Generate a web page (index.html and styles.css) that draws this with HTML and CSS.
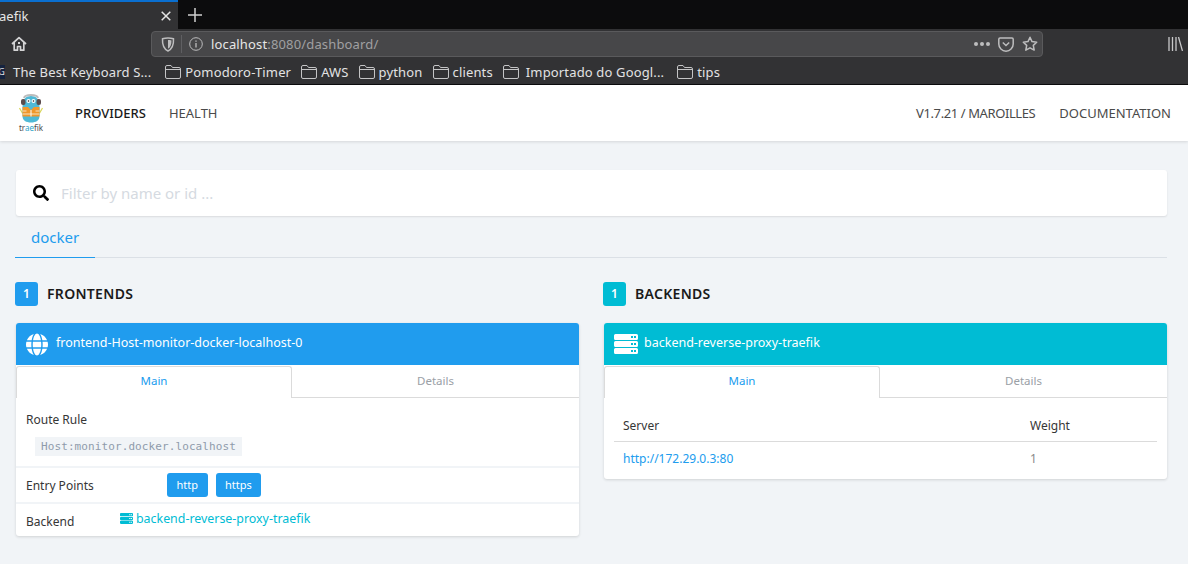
FILE: index.html
```html
<!DOCTYPE html>
<html lang="en">
<head>
    <meta charset="UTF-8">
    <meta name="viewport" content="width=device-width, initial-scale=1.0">
    <title>Traefik dashboard</title>
    <link rel="stylesheet" href="styles.css">
</head>
<body>
    <svg class="icon-defs" width="0" height="0">
        <symbol id="folder" viewBox="0 0 16 14">
            <path d="M.5 12V2A1.5 1.5 0 0 1 2 .5h4L7.500 2.500H14A1.500 1.500 0 0 1 15.500 4v8a1.500 1.500 0 0 1-1.500 1.500H2A1.500 1.500 0 0 1 .5 12zM.5 4.500h15" fill="none" stroke="currentColor"/>
        </symbol>
        <symbol id="server" viewBox="0 0 24 20">
            <path fill-rule="evenodd" d="M1.500 0h21A1.500 1.500 0 0 1 24 1.500v3A1.500 1.500 0 0 1 22.500 6h-21A1.500 1.500 0 0 1 0 4.500v-3A1.500 1.500 0 0 1 1.500 0zM17 2v2h2V2zm3 0v2h2V2zM1.500 7h21A1.500 1.500 0 0 1 24 8.500v3a1.500 1.500 0 0 1-1.500 1.500h-21A1.500 1.500 0 0 1 0 11.500v-3A1.500 1.500 0 0 1 1.500 7zM17 9v2h2V9zm3 0v2h2V9zM1.500 14h21a1.500 1.500 0 0 1 1.500 1.500v3a1.500 1.500 0 0 1-1.500 1.500h-21A1.500 1.500 0 0 1 0 18.500v-3A1.500 1.500 0 0 1 1.500 14zM17 16v2h2v-2zm3 0v2h2v-2z"/>
        </symbol>
    </svg>

    <div class="browser">
        <div class="tabstrip">
            <div class="tab">
                <span class="tab-title">aefik</span>
                <svg class="tab-close" width="10" height="10" viewBox="0 0 10 10"><path d="M.7.700l8.600 8.600M9.300.700L.7 9.300" stroke="#e4e4e4" stroke-width="1.500"/></svg>
            </div>
            <svg class="tab-new" width="14" height="14" viewBox="0 0 14 14"><path d="M7 0v14M0 7h14" stroke="#d0d0d0" stroke-width="1.500"/></svg>
        </div>

        <div class="toolbar">
            <svg class="home-icon" width="16" height="16" viewBox="0 0 16 16"><path d="M1 8l7-6.300L15 8M3.200 6.500V14.200h3.300v-3.700h3v3.700h3.300V6.500" fill="none" stroke="#d4d4d5" stroke-width="1.700" stroke-linejoin="round"/><rect x="7" y="6" width="2" height="2" fill="#d4d4d5"/></svg>
            <div class="urlbar">
                <svg class="shield" width="14" height="15" viewBox="0 0 14 15"><path d="M1.500 1.800C3.500 1.200 5 1 7 1s3.500.2 5.500.8c.3 5.800-1.300 10.200-5.500 12.200C2.800 12 1.200 7.600 1.500 1.800z" fill="none" stroke="#bdbdbe" stroke-width="1.500"/><path d="M7 3c1.200 0 2.300.1 3.500.4 0 3.800-1 6.900-3.500 8.400z" fill="#bdbdbe"/></svg>
                <span class="url-sep"></span>
                <svg class="info" width="14" height="14" viewBox="0 0 14 14"><circle cx="7" cy="7" r="6.300" fill="none" stroke="#bdbdbe"/><path d="M7 6v4.500M7 3.500v1.300" stroke="#bdbdbe" stroke-width="1.300"/></svg>
                <span class="url-text">localhost<span class="url-rest">:8080/dashboard/</span></span>
                <span class="url-dots"><i></i><i></i><i></i></span>
                <svg class="pocket" width="16" height="15" viewBox="0 0 16 15"><path d="M2 1h12a1.200 1.200 0 0 1 1.200 1.200V7A7.200 7.200 0 0 1 .8 7V2.200A1.200 1.200 0 0 1 2 1z" fill="none" stroke="#bdbdbe" stroke-width="1.500"/><path d="M4.800 5.500L8 8.500l3.200-3" fill="none" stroke="#bdbdbe" stroke-width="1.500"/></svg>
                <svg class="star" width="16" height="16" viewBox="0 0 16 16"><path d="M8 1.300l2 4.300 4.700.6-3.400 3.200.9 4.700L8 11.800l-4.200 2.300.9-4.700L1.300 6.200 6 5.600z" fill="none" stroke="#bdbdbe" stroke-width="1.500" stroke-linejoin="round"/></svg>
            </div>
            <svg class="library" width="15" height="14" viewBox="0 0 15 14"><path d="M1 0v14M4.500 0v14M8 0v14M10.500 0l4 14" stroke="#c8c8c9" stroke-width="1.300"/></svg>
        </div>

        <div class="bookmarks">
            <span class="favicon">G</span>
            <span class="bm-first">The Best Keyboard S...</span>
            <span class="bm"><svg class="folder"><use href="#folder"/></svg>Pomodoro-Timer</span>
            <span class="bm"><svg class="folder"><use href="#folder"/></svg>AWS</span>
            <span class="bm"><svg class="folder"><use href="#folder"/></svg>python</span>
            <span class="bm"><svg class="folder"><use href="#folder"/></svg>clients</span>
            <span class="bm bm-wide"><svg class="folder"><use href="#folder"/></svg>Importado do Googl...</span>
            <span class="bm"><svg class="folder"><use href="#folder"/></svg>tips</span>
        </div>
    </div>

    <nav class="navbar">
        <div class="logo">
            <svg width="26" height="30" viewBox="0 0 26 30">
                <path d="M1.500 15l3.500 6M24.500 15L21 21" stroke="#d9d65a" stroke-width="1.300"/>
                <path d="M4.500 14C4.500 6 8 3 13 3s8.500 3 8.500 11v9c0 4.500-3.500 6.500-8.500 6.500S4.500 27.500 4.500 23z" fill="#4fb9d6"/>
                <path d="M6 5C7 1 19 1 20 5" fill="none" stroke="#bcbcbc" stroke-width="2"/>
                <rect x="3" y="6" width="4.500" height="6" rx="2" fill="#5a4c4c"/>
                <rect x="18.500" y="6" width="4.500" height="6" rx="2" fill="#5a4c4c"/>
                <circle cx="10.500" cy="8" r="2" fill="#fff"/>
                <circle cx="15.500" cy="8" r="2" fill="#fff"/>
                <circle cx="10.500" cy="8" r=".8" fill="#222"/>
                <circle cx="15.500" cy="8" r=".8" fill="#222"/>
                <path d="M4.500 14H10l3 3 3-3h5.500v9.500H4.500z" fill="#f0972b"/>
                <path d="M4.500 18h4M17.500 18h4M4.500 21h17" stroke="#f8e3c0" stroke-width="1"/>
                <path d="M13 17v6.500" stroke="#fff" stroke-width="1"/>
            </svg>
            <span class="logo-text">tr<span class="logo-ae">ae</span>fik</span>
        </div>
        <a class="nav-link active">PROVIDERS</a>
        <a class="nav-link">HEALTH</a>
        <span class="nav-spacer"></span>
        <a class="nav-link version">V1.7.21 / MAROILLES</a>
        <a class="nav-link">DOCUMENTATION</a>
    </nav>

    <main class="content">
        <div class="search-box">
            <svg class="search-icon" width="16" height="16" viewBox="0 0 512 512"><path d="M505 442.7L405.3 343c-4.500-4.500-10.600-7-17-7H372c27.600-35.300 44-79.700 44-128C416 93.100 322.900 0 208 0S0 93.100 0 208s93.100 208 208 208c48.300 0 92.700-16.400 128-44v16.300c0 6.400 2.500 12.500 7 17l99.700 99.700c9.400 9.400 24.600 9.400 33.900 0l28.300-28.300c9.400-9.400 9.400-24.600.1-34zM208 336c-70.700 0-128-57.200-128-128 0-70.700 57.200-128 128-128 70.700 0 128 57.200 128 128 0 70.700-57.200 128-128 128z"/></svg>
            <span class="search-placeholder">Filter by name or id ...</span>
        </div>

        <div class="provider-tabs">
            <a class="provider-tab">docker</a>
        </div>

        <div class="columns">
            <section class="column">
                <h2 class="section-title"><span class="count count-blue">1</span>FRONTENDS</h2>
                <div class="card">
                    <div class="card-head head-blue">
                        <svg class="globe" width="22" height="23" viewBox="0 0 496 512"><path d="M336.500 160C322 70.700 287.800 8 248 8s-74 62.700-88.500 152h177zM152 256c0 22.200 1.200 43.500 3.300 64h185.300c2.100-20.500 3.300-41.800 3.300-64s-1.200-43.500-3.300-64H155.300c-2.100 20.500-3.300 41.800-3.300 64zm324.700-96c-28.600-67.900-86.500-120.400-158-141.600 24.400 33.800 41.200 84.700 50 141.600h108zM177.200 18.400C105.800 39.600 47.800 92.100 19.300 160h108c8.700-56.900 25.500-107.800 49.900-141.600zM487.400 192H372.700c2.100 21 3.300 42.500 3.300 64s-1.200 43-3.300 64h114.600c5.500-20.500 8.600-41.800 8.600-64s-3.100-43.500-8.500-64zM120 256c0-21.500 1.200-43 3.300-64H8.600C3.200 212.500 0 233.800 0 256s3.200 43.500 8.600 64h114.600c-2-21-3.200-42.500-3.200-64zm39.500 96c14.500 89.300 48.700 152 88.500 152s74-62.700 88.500-152h-177zm159.300 141.600c71.400-21.200 129.400-73.700 158-141.600h-108c-8.800 56.900-25.600 107.800-50 141.600zM19.300 352c28.600 67.900 86.500 120.400 158 141.600-24.400-33.800-41.200-84.700-50-141.600h-108z" fill="#fff"/></svg>
                        <span class="card-name">frontend-Host-monitor-docker-localhost-0</span>
                    </div>
                    <div class="card-tabs">
                        <a class="card-tab current">Main</a>
                        <a class="card-tab">Details</a>
                    </div>
                    <div class="rule-block">
                        <div class="row-label">Route Rule</div>
                        <code class="rule-code">Host:monitor.docker.localhost</code>
                    </div>
                    <div class="entry-row">
                        <span class="row-label entry-label">Entry Points</span>
                        <span class="tag">http</span>
                        <span class="tag">https</span>
                    </div>
                    <div class="backend-row">
                        <span class="row-label backend-label">Backend</span>
                        <a class="backend-link"><svg class="server-small"><use href="#server"/></svg>backend-reverse-proxy-traefik</a>
                    </div>
                </div>
            </section>

            <section class="column">
                <h2 class="section-title"><span class="count count-teal">1</span>BACKENDS</h2>
                <div class="card">
                    <div class="card-head head-teal">
                        <svg class="server-big"><use href="#server"/></svg>
                        <span class="card-name">backend-reverse-proxy-traefik</span>
                    </div>
                    <div class="card-tabs">
                        <a class="card-tab current">Main</a>
                        <a class="card-tab">Details</a>
                    </div>
                    <div class="table-wrap">
                        <table class="servers">
                            <thead>
                                <tr><th>Server</th><th class="weight">Weight</th></tr>
                            </thead>
                            <tbody>
                                <tr><td><a class="server-link">http://172.29.0.3:80</a></td><td class="weight">1</td></tr>
                            </tbody>
                        </table>
                    </div>
                </div>
            </section>
        </div>
    </main>
</body>
</html>
```

FILE: styles.css
```css
* {
    box-sizing: border-box;
}

body {
    margin: 0;
    height: 564px;
    overflow: hidden;
    font-family: "Noto Sans", Arial, sans-serif;
    background-color: #f1f4f7;
    color: #333;
}

.icon-defs {
    display: block;
    height: 0;
}

/* browser chrome */
.browser {
    height: 85px;
    background-color: #323234;
    border-bottom: 1px solid #0c0c0d;
}

.tabstrip {
    display: flex;
    align-items: center;
    height: 29px;
    background-color: #0c0c0d;
}

.tab {
    display: flex;
    align-items: center;
    justify-content: space-between;
    width: 178px;
    height: 29px;
    padding-right: 7px;
    background-color: #323234;
    border-top: 2px solid #0a6fd0;
}

.tab-title {
    margin-left: -1px;
    font-size: 13px;
    color: #e6e6e6;
}

.tab-close,
.tab-new {
    flex: none;
}

.tab-new {
    margin-left: 10px;
}

.toolbar {
    display: flex;
    align-items: center;
    height: 30px;
    padding-left: 11px;
}

.urlbar {
    display: flex;
    align-items: center;
    width: 892px;
    height: 26px;
    margin-left: 124px;
    padding: 0 4px 0 9px;
    background-color: #474749;
    border: 1px solid #5a5a5c;
    border-radius: 4px;
}

.url-sep {
    width: 1px;
    height: 18px;
    margin: 0 7px 0 6px;
    background-color: #5f5f62;
}

.url-text {
    flex: 1;
    margin-left: 8px;
    font-size: 13px;
    letter-spacing: 0.15px;
    color: #e6e6e6;
}

.url-rest {
    color: #a0a0a2;
}

.url-dots {
    display: flex;
    gap: 2px;
    margin-right: 8px;
}

.url-dots i {
    width: 4px;
    height: 4px;
    border-radius: 50%;
    background-color: #bdbdbe;
}

.star {
    margin-left: 8px;
}

.library {
    margin-left: 125px;
}

.bookmarks {
    display: flex;
    align-items: center;
    height: 25px;
    font-size: 13px;
    letter-spacing: 0.15px;
    color: #e2e2e3;
    overflow: hidden;
}

.favicon {
    width: 5px;
    height: 14px;
    overflow: hidden;
    font-size: 9px;
    line-height: 14px;
    direction: rtl;
    background-color: #15233f;
}

.bm-first {
    margin-left: 8px;
    margin-right: 4px;
}

.bm {
    display: flex;
    align-items: center;
    margin-left: 10px;
}

.folder {
    width: 16px;
    height: 14px;
    margin-right: 4px;
    color: #c4c4c5;
}

.bm-wide .folder {
    margin-right: 7px;
}

.bm-wide {
    margin-right: 3px;
}

/* navbar */
.navbar {
    display: flex;
    align-items: center;
    height: 56px;
    padding: 0 17px 0 18px;
    background-color: #fff;
    box-shadow: 0 1px 3px rgba(0, 0, 0, 0.12);
}

.logo {
    display: flex;
    flex-direction: column;
    align-items: center;
    width: 26px;
    margin-right: 31px;
}

.logo-text {
    font-size: 8px;
    line-height: 10px;
    color: #4a4a4a;
}

.logo-ae {
    color: #2aa2c9;
}

.nav-link {
    margin-right: 24px;
    font-size: 13px;
    color: #4a4a4a;
}

.nav-link:last-child {
    margin-right: 0;
}

.nav-link.active {
    margin-right: 23px;
    font-weight: 500;
    color: #1a1a1a;
}

.nav-link.version {
    letter-spacing: -0.4px;
}

.nav-spacer {
    flex: 1;
}

/* page content */
.content {
    padding: 29px 21px 0 15px;
}

.search-box {
    display: flex;
    align-items: center;
    height: 46px;
    margin-left: 1px;
    padding-left: 17px;
    background-color: #fff;
    border-radius: 3px;
    box-shadow: 0 1px 2px rgba(0, 0, 0, 0.1);
}

.search-placeholder {
    margin-left: 12px;
    font-size: 15px;
    color: #d5dae1;
}

.provider-tabs {
    height: 42px;
    border-bottom: 1px solid #dbe0e6;
}

.provider-tab {
    display: block;
    width: 80px;
    height: 42px;
    padding-top: 11px;
    text-align: center;
    font-size: 15px;
    color: #209cee;
    border-bottom: 1px solid #209cee;
}

.columns {
    display: grid;
    grid-template-columns: 564px 564px;
    gap: 24px;
    margin-top: 24px;
}

.section-title {
    display: flex;
    align-items: flex-start;
    height: 24px;
    margin: 0 0 17px;
    font-size: 14px;
    line-height: 24px;
    letter-spacing: 0.3px;
    font-weight: 600;
    color: #1a1a1a;
}

.count {
    width: 23px;
    height: 24px;
    margin-right: 9px;
    border-radius: 3px;
    text-align: center;
    font-size: 12px;
    line-height: 24px;
    font-weight: 600;
    color: #fff;
}

.count-blue {
    background-color: #209cee;
}

.count-teal {
    background-color: #00bcd4;
}

.card {
    margin-left: 1px;
    background-color: #fff;
    border-radius: 3px;
    overflow: hidden;
    box-shadow: 0 1px 3px rgba(0, 0, 0, 0.14);
}

.card-head {
    display: flex;
    align-items: center;
    height: 42px;
    padding-left: 10px;
    color: #fff;
}

.head-blue {
    background-color: #209cee;
}

.head-teal {
    background-color: #00bcd4;
}

.globe {
    margin-right: 8px;
}

.server-big {
    width: 24px;
    height: 20px;
    margin-right: 6px;
    fill: #fff;
}

.card-name {
    padding-bottom: 3px;
    font-size: 12.5px;
}

.card-tabs {
    display: grid;
    grid-template-columns: 276px 1fr;
    height: 33px;
    padding-top: 1px;
}

.card-tab {
    padding-top: 7px;
    text-align: center;
    font-size: 11.5px;
    color: #9aa0a6;
    border-bottom: 1px solid #dbdbdb;
}

.card-tab.current {
    padding-top: 6px;
    color: #209cee;
    border: 1px solid #dbdbdb;
    border-bottom: none;
    border-radius: 3px 3px 0 0;
}

.row-label {
    font-size: 12px;
    color: #363636;
}

.rule-block {
    height: 70px;
    padding: 13px 0 0 10px;
    border-bottom: 2px solid #f1f4f7;
}

.rule-code {
    display: block;
    width: 207px;
    height: 19px;
    margin: 9px 0 0 9px;
    padding-left: 6px;
    font-family: "DejaVu Sans Mono", "Liberation Mono", monospace;
    font-size: 11px;
    line-height: 19px;
    letter-spacing: 0.1px;
    color: #8f9bab;
    background-color: #f1f4f7;
}

.entry-row {
    display: flex;
    align-items: center;
    height: 36px;
    padding-left: 10px;
    border-bottom: 2px solid #f1f4f7;
}

.entry-label {
    width: 141px;
}

.tag {
    height: 24px;
    margin-right: 8px;
    padding: 0 9.5px;
    border-radius: 3px;
    font-size: 11px;
    line-height: 23px;
    color: #fff;
    background-color: #209cee;
}

.backend-row {
    display: flex;
    align-items: flex-start;
    height: 32px;
    padding: 6px 0 0 10px;
}

.backend-label {
    width: 94px;
    margin-top: 3px;
}

.backend-link {
    display: flex;
    align-items: center;
    font-size: 12.4px;
    color: #00bcd4;
}

.server-small {
    width: 13px;
    height: 11px;
    margin-right: 3px;
    fill: #00bcd4;
}

.table-wrap {
    padding: 16px 10px 4px;
}

.servers {
    width: 100%;
    border-collapse: collapse;
    font-size: 12px;
}

.servers th {
    height: 27px;
    padding: 0 9px 4px;
    text-align: left;
    font-weight: 400;
    color: #363636;
    border-bottom: 1px solid #dbdbdb;
}

.servers td {
    height: 34px;
    padding: 0 9px;
    color: #8a8a8a;
}

.servers .weight {
    width: 136px;
}

.server-link {
    color: #209cee;
}
```
